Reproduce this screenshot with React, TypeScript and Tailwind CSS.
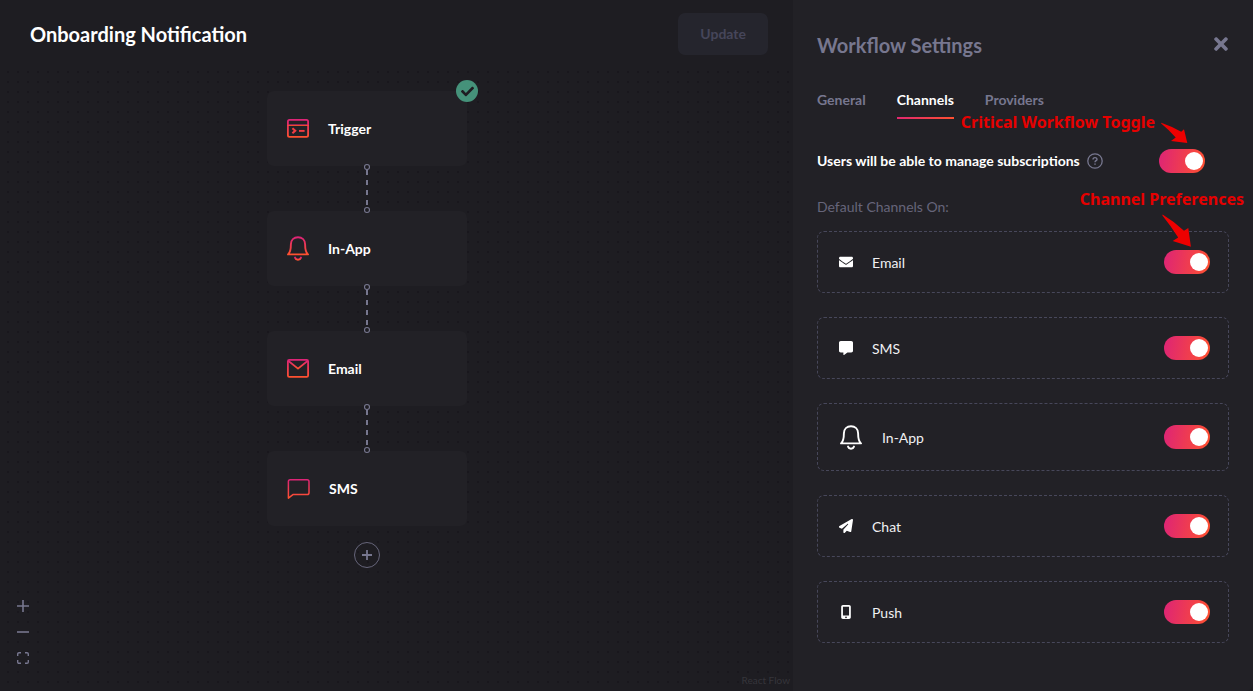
import React from "react";
import { FaEnvelope, FaTimes, FaCheck } from "react-icons/fa";
import { FaMessage, FaPaperPlane, FaMobileScreenButton } from "react-icons/fa6";

function BellShape({ stroke }: { stroke: string }) {
  return (
    <svg width="22" height="25" viewBox="0 0 22 25" fill="none" stroke={stroke} strokeWidth="1.9" strokeLinejoin="round" strokeLinecap="round" aria-hidden="true">
      <path d="M1 18.4C3 16.8 3.9 13.6 3.9 8.2C3.9 4 6.9 1.2 11 1.2S18.1 4 18.1 8.2C18.1 13.6 19 16.8 21 18.4Z" />
      <path d="M8 21.6C8.5 23 9.6 23.7 11 23.7S13.5 23 14 21.6" />
    </svg>
  );
}

function TriggerIcon() {
  return (
    <svg width="22" height="19" viewBox="0 0 22 19" fill="none" stroke="url(#brand)" strokeWidth="1.8" aria-hidden="true">
      <rect x="0.9" y="0.9" width="20.2" height="17" rx="1.6" />
      <path d="M1 6.1H21V6.2H1Z" strokeWidth="1.4" />
      <path d="M5.4 9.3L8.2 11.8L5.4 14.3" stroke="#f23c43" strokeWidth="2.1" />
      <path d="M12 11.9H17.6" stroke="#f23c43" strokeWidth="1.9" />
    </svg>
  );
}

function MailIcon() {
  return (
    <svg width="22" height="19" viewBox="0 0 22 19" fill="none" stroke="url(#brand)" strokeWidth="1.8" strokeLinejoin="round" aria-hidden="true">
      <rect x="0.9" y="0.9" width="20.2" height="17" rx="1.4" />
      <path d="M1.2 1.8L11 9.6L20.8 1.8" />
    </svg>
  );
}

function ChatIcon() {
  return (
    <svg width="23" height="20" viewBox="0 0 23 20" fill="none" stroke="url(#brand)" strokeWidth="1.5" strokeLinejoin="round" aria-hidden="true">
      <path d="M1.4 19.1V2.6C1.4 1.5 2.1 0.8 3.2 0.8H20.2C21.3 0.8 22 1.5 22 2.6V13.8C22 14.9 21.3 15.6 20.2 15.6H5.9Z" />
    </svg>
  );
}

const steps = [
  { label: "Trigger", icon: <TriggerIcon />, place: "top-[91px]", done: true },
  { label: "In-App", icon: <BellShape stroke="url(#brand)" />, place: "top-[211px]" },
  { label: "Email", icon: <MailIcon />, place: "top-[331px]" },
  { label: "SMS", icon: <ChatIcon />, place: "top-[451px]" },
];

const links = ["top-[163px]", "top-[283px]", "top-[403px]"];

const channels = [
  { id: "email", label: "Email", icon: <FaEnvelope size={14} /> },
  { id: "sms", label: "SMS", icon: <FaMessage size={14} /> },
  { id: "in-app", label: "In-App", icon: <BellShape stroke="currentColor" />, large: true },
  { id: "chat", label: "Chat", icon: <FaPaperPlane size={14} /> },
  { id: "push", label: "Push", icon: <FaMobileScreenButton size={14} /> },
];

function Toggle({ id }: { id: string }) {
  return (
    <input
      id={id}
      type="checkbox"
      role="switch"
      defaultChecked
      className="relative h-6 w-[46px] shrink-0 cursor-pointer appearance-none rounded-full bg-[#3d3d4d] before:absolute before:top-[3px] before:left-[3px] before:size-[18px] before:rounded-full before:bg-white checked:bg-[linear-gradient(99deg,#dd2476_0%,#ff512f_100%)] checked:before:left-[26px]"
    />
  );
}

function Flow() {
  return (
    <>
      <svg className="absolute inset-x-0 top-[70px] bottom-0 h-[calc(100%-70px)] w-full" aria-hidden="true">
        <defs>
          <pattern id="dots" width="10" height="10" patternUnits="userSpaceOnUse" x="3" y="7">
            <circle cx="5" cy="5" r="1" fill="#16151a" />
          </pattern>
          <linearGradient id="brand" x1="0" y1="0" x2="0" y2="1">
            <stop offset="0" stopColor="#dd2476" />
            <stop offset="1" stopColor="#ff512f" />
          </linearGradient>
        </defs>
        <rect width="100%" height="100%" fill="url(#dots)" />
      </svg>

      {steps.map((s) => (
        <div key={s.label} className={`absolute left-[267px] flex h-[75px] w-[200px] items-center gap-[19px] rounded-[7px] bg-[#222126] pl-5 text-sm font-bold text-white ${s.place}`}>
          {s.icon}
          <span>{s.label}</span>
          {s.done && (
            <span className="absolute -top-[11px] -right-[11px] flex size-[22px] items-center justify-center rounded-full bg-[#45927a] text-[#1e1d22]">
              <FaCheck size={13} />
            </span>
          )}
        </div>
      ))}

      {links.map((place) => (
        <svg key={place} className={`absolute left-[362px] ${place}`} width="10" height="51" viewBox="0 0 10 51" fill="none" stroke="#77778f" aria-hidden="true">
          <circle cx="5" cy="4" r="2.5" strokeWidth="1.1" />
          <path d="M5 6.5V47" strokeWidth="2" strokeDasharray="5.5 5 5 5 5 5 5 50" />
          <circle cx="5" cy="47" r="2.5" strokeWidth="1.1" fill="#1e1d22" />
        </svg>
      ))}

      <button type="button" aria-label="Add step" className="absolute top-[542px] left-[354px] flex size-[26px] items-center justify-center rounded-full border border-[#66657a]">
        <svg width="10" height="10" viewBox="0 0 10 10" stroke="#77778f" strokeWidth="1.8" aria-hidden="true">
          <path d="M5 0V10M0 5H10" />
        </svg>
      </button>

      <div className="absolute bottom-[27px] left-[17px] flex flex-col gap-[14px] text-[#77778f]">
        <button type="button" aria-label="Zoom in" className="size-3">
          <svg width="12" height="12" viewBox="0 0 12 12" stroke="currentColor" strokeWidth="1.6" aria-hidden="true">
            <path d="M6 0V12M0 6H12" />
          </svg>
        </button>
        <button type="button" aria-label="Zoom out" className="size-3">
          <svg width="12" height="12" viewBox="0 0 12 12" stroke="currentColor" strokeWidth="1.6" aria-hidden="true">
            <path d="M0 6H12" />
          </svg>
        </button>
        <button type="button" aria-label="Fit view" className="size-3">
          <svg width="12" height="12" viewBox="0 0 12 12" fill="none" stroke="currentColor" strokeWidth="1.4" aria-hidden="true">
            <path d="M0.7 4V2Q0.7 0.7 2 0.7H4M8 0.7H10Q11.3 0.7 11.3 2V4M11.3 8V10Q11.3 11.3 10 11.3H8M4 11.3H2Q0.7 11.3 0.7 10V8" />
          </svg>
        </button>
      </div>

      <a href="#react-flow" className="absolute right-[3px] bottom-[5px] text-[10px] leading-3 text-[#36353b]">
        React Flow
      </a>
    </>
  );
}

export default function App() {
  return (
    <div className="flex min-h-screen bg-[#1e1d22] font-['Lato',sans-serif] text-sm text-white">
      <main className="relative min-w-0 flex-1">
        <Flow />
        <header className="relative flex h-[70px] items-center justify-between pr-[25px] pb-[2px] pl-[30px]">
          <h1 className="text-xl font-bold">Onboarding Notification</h1>
          <button type="button" disabled className="h-[42px] rounded-[7px] bg-[#25252d] px-[22px] text-sm font-bold text-[#46465a]">
            Update
          </button>
        </header>
      </main>

      <aside className="w-[460px] shrink-0 rounded-br-[7px] bg-[#222126] px-6 pt-8">
        <div className="flex h-7 items-center justify-between pb-[2px]">
          <h2 className="text-xl font-bold text-[#77778f]">Workflow Settings</h2>
          <button type="button" aria-label="Close" className="-mt-[2px] -mr-[2px] text-[#77778f]">
            <FaTimes size={20} />
          </button>
        </div>

        <nav className="mt-7 flex gap-[31px] font-bold text-[#77778f]">
          <button type="button" className="h-[31px] pb-[7px]">General</button>
          <button type="button" className="h-[31px] border-b-2 border-b-transparent pb-[5px] text-white [border-image:linear-gradient(99deg,#dd2476,#ff512f)_1]">
            Channels
          </button>
          <button type="button" className="h-[31px] pb-[7px]">Providers</button>
        </nav>

        <div className="relative mt-[30px] flex h-6 items-center pr-6">
          <label htmlFor="critical" className="font-bold">Users will be able to manage subscriptions</label>
          <svg className="ml-[7px]" width="16" height="16" viewBox="0 0 16 16" fill="none" stroke="#77778f" aria-hidden="true">
            <circle cx="8" cy="8" r="7.2" strokeWidth="1.3" />
            <path d="M6 6.5C6 5.3 6.9 4.6 8 4.6S10 5.3 10 6.4C10 7.6 8 7.8 8 9.2" strokeWidth="1.4" />
            <path d="M8 10.4V11.8" strokeWidth="1.5" />
          </svg>
          <span className="ml-auto flex">
            <Toggle id="critical" />
          </span>
          <span className="absolute right-[74px] bottom-[39px] font-['Noto_Sans',sans-serif] text-base leading-6 font-bold whitespace-nowrap text-[#e60000]">
            Critical Workflow Toggle
          </span>
          <svg className="absolute right-[41px] bottom-[29px]" width="28" height="22" viewBox="0 0 28 22" fill="#ee0000" aria-hidden="true">
            <path d="M1.2 0.8Q12 4.5 21.2 9.8L24 7.3L27.3 21L11 19L15.7 15.6Q9 8 1.2 1.6Z" />
          </svg>
        </div>

        <div className="relative mt-6 leading-5 text-[#66657a]">
          Default Channels On:
          <span className="absolute top-[-10px] -right-[15px] font-['Noto_Sans',sans-serif] text-base leading-6 font-bold whitespace-nowrap text-[#e60000]">
            Channel Preferences
          </span>
          <svg className="absolute top-[17px] right-[37px] z-10" width="30" height="33" viewBox="0 0 30 33" fill="#ee0000" aria-hidden="true">
            <path d="M0.6 0.6Q12 7.5 22 16.8L26.3 14L28.9 32.7L10.7 26.9L16.2 23.5Q9 12 0.4 1.4Z" />
          </svg>
        </div>

        <ul className="mt-[14px] flex flex-col gap-6 pb-12">
          {channels.map((c) => (
            <li key={c.id} className={`flex items-center rounded-[7px] border border-dashed border-[#47475a] pr-[18px] ${c.large ? "h-[68px] pl-[22px]" : "h-[62px] pl-[21px]"}`}>
              {c.icon}
              <label htmlFor={c.id} className={c.large ? "ml-5 pt-[2px] text-[#f0f0f2]" : "ml-[19px] pt-[2px] text-[#f0f0f2]"}>{c.label}</label>
              <span className="ml-auto flex">
                <Toggle id={c.id} />
              </span>
            </li>
          ))}
        </ul>
      </aside>
    </div>
  );
}
